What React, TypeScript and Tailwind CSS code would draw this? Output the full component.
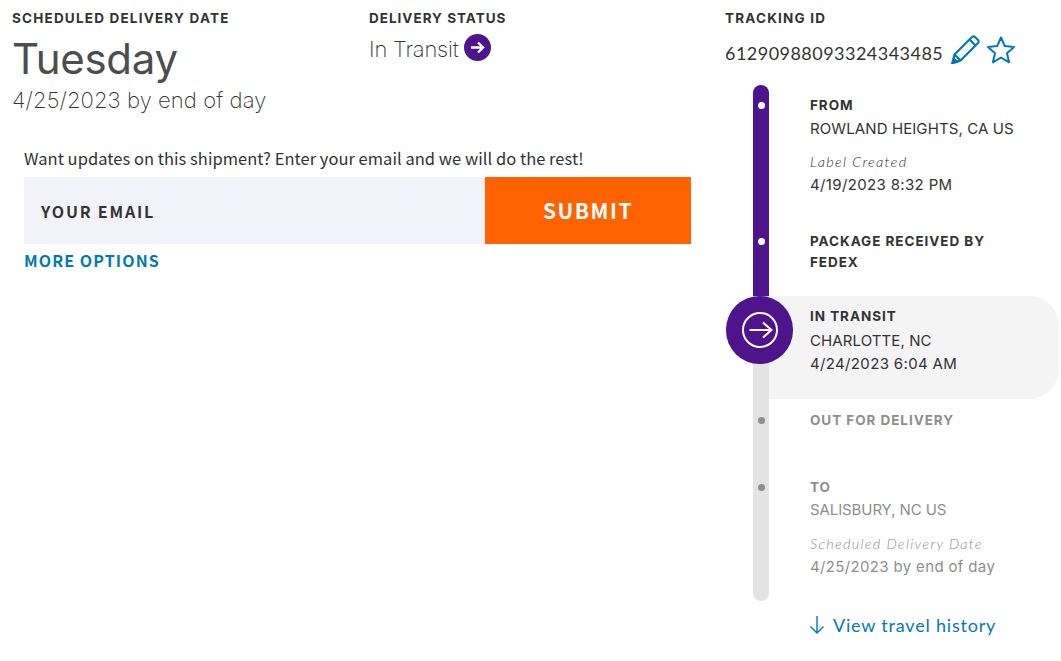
import React from "react";

const mont = "font-['Inter',sans-serif]";
const source = "font-['Noto_Sans_CJK_SC',sans-serif]";
const lato = "font-['Lato',sans-serif]";

function Label({ children, muted, className }: { children: React.ReactNode; muted?: boolean; className?: string }) {
  return (
    <div
      className={`${mont} text-[13.5px] leading-[21px] font-bold ${className ?? "tracking-[0.95px]"} ${
        muted ? "text-[#8e8e8e]" : "text-[#333333]"
      }`}>
      {children}
    </div>
  );
}

function Line({ children, className }: { children: React.ReactNode; className?: string }) {
  return <div className={`${mont} text-[15px] leading-[24px] ${className ?? "tracking-[0.1px]"}`}>{children}</div>;
}

function Note({ children }: { children: React.ReactNode }) {
  return <div className={`${lato} text-[14.5px] leading-[22px] font-light italic tracking-[1.25px]`}>{children}</div>;
}

function Dot({ muted }: { muted?: boolean }) {
  return <div className={`w-[7px] h-[7px] rounded-full ${muted ? "bg-[#8e8e8e]" : "bg-white"}`} />;
}

function Row({
  h,
  rail,
  dot,
  muted,
  top,
  extra,
  children,
}: {
  h: string;
  rail: string;
  dot?: boolean;
  muted?: boolean;
  top: string;
  extra?: string;
  children: React.ReactNode;
}) {
  return (
    <div className={`flex ${h}`}>
      <div className={`w-4 shrink-0 ${rail} ${top} flex justify-center`}>{dot && <Dot muted={muted} />}</div>
      <div className={`flex-1 pl-[41px] ${extra ?? ""} ${muted ? "text-[#8e8e8e]" : "text-[#333333]"}`}>
        {children}
      </div>
    </div>
  );
}

export default function App() {
  return (
    <div className="w-[1061px] h-[661px] bg-white flex overflow-hidden">
      <div className="w-[725px] shrink-0 pl-3 pt-[8px]">
        <div className="flex">
          <div className="w-[357px]">
            <Label className="tracking-[1.2px]">SCHEDULED DELIVERY DATE</Label>
            <div className={`${mont} text-[42px] leading-[56px] text-[#4d4d4d] tracking-[-0.3px] mt-[2px]`}>
              Tuesday
            </div>
            <div className={`${mont} text-[22px] leading-[26px] font-extralight text-[#333333] tracking-[0.08px]`}>
              4/25/2023 by end of day
            </div>
          </div>
          <div>
            <Label className="tracking-[1px]">DELIVERY STATUS</Label>
            <div className="flex items-center gap-[6px] mt-[4px]">
              <span className={`${mont} text-[22px] leading-[32px] font-extralight text-[#333333] tracking-[-0.2px]`}>
                In Transit
              </span>
              <svg width="27" height="27" viewBox="0 0 27 27" className="-mt-[3px]">
                <circle cx="13.5" cy="13.5" r="13.5" fill="#4d148c" />
                <path d="M7 13.5h12M14 8.5l5 5-5 5" fill="none" stroke="#fff" strokeWidth="2.4" />
              </svg>
            </div>
          </div>
        </div>
        <div className="pl-3 mt-[33px] w-[679px]">
          <div className={`${source} text-[16.5px] leading-[24px] tracking-[0.03px] text-[#333333]`}>
            Want updates on this shipment? Enter your email and we will do the rest!
          </div>
          <div className="flex h-[67px] mt-[7px]">
            <div
              className={`flex-1 bg-[#f2f3f8] flex items-center pl-[17px] ${source} text-[16px] font-bold tracking-[1.8px] text-[#333333]`}>
              YOUR EMAIL
            </div>
            <div
              className={`w-[206px] bg-[#ff6200] flex items-center justify-center ${source} text-[21px] font-bold tracking-[1.5px] text-white`}>
              SUBMIT
            </div>
          </div>
          <div className={`${source} text-[16px] leading-[24px] font-bold tracking-[1.1px] text-[#007ab7] mt-[4px]`}>
            MORE OPTIONS
          </div>
        </div>
      </div>

      <div className="flex-1 pt-[8px]">
        <Label className="tracking-[1.2px]">TRACKING ID</Label>
        <div className="flex items-center h-[34px] mt-[7px]">
          <span className={`${lato} text-[18px] leading-[24px] tracking-[0.47px] text-[#333333]`}>
            61290988093324343485
          </span>
          <svg width="30" height="30" viewBox="0 0 30 30" className="ml-[8px] mb-[8px]" fill="none" stroke="#007ab7" strokeWidth="2.2">
            <path d="M1.5 29l2-8.5L21 3a2 2 0 0 1 3 0l3 3a2 2 0 0 1 0 3L9.5 26.5z" />
            <path d="M3.5 20.5l6 6M18.5 5.5l6 6" />
            <path d="M1.5 29l4.5-1.2-3.3-3.3z" fill="#007ab7" />
          </svg>
          <svg width="30" height="30" viewBox="0 0 30 30" className="ml-[5px] mb-[7px]" fill="none" stroke="#007ab7" strokeWidth="2">
            <path d="M15 2.5l3.8 8.6 9.2.9-7 6.2 2.1 9.1-8.1-4.8-8.1 4.8 2.1-9.1-7-6.2 9.2-.9z" strokeLinejoin="round" />
          </svg>
        </div>

        <div className="relative ml-7 mt-[15px]">
          <Row h="h-[136px]" rail="bg-[#4d148c] rounded-t-lg" top="pt-[17px]" dot>
            <div className="pt-[10px]">
              <Label>FROM</Label>
              <Line className="tracking-[0.1px] mt-px">ROWLAND HEIGHTS, CA US</Line>
              <div className="mt-[10px]">
                <Note>Label Created</Note>
              </div>
              <Line className="tracking-[0.35px]">4/19/2023 8:32 PM</Line>
            </div>
          </Row>
          <Row h="h-[75px]" rail="bg-[#4d148c]" top="pt-[17px]" dot>
            <div className="pt-[10px] w-[200px]">
              <Label>PACKAGE RECEIVED BY FEDEX</Label>
            </div>
          </Row>
          <Row h="h-[103px]" rail="bg-[#e3e3e3]" top="pt-0" extra="bg-[#f4f4f4] rounded-r-[30px] mr-[2px]">
            <div className="pt-[10px]">
              <Label>IN TRANSIT</Label>
              <Line className="tracking-[0.1px] mt-[2px]">CHARLOTTE, NC</Line>
              <Line className="tracking-[0.35px] -mt-px">4/24/2023 6:04 AM</Line>
            </div>
          </Row>
          <Row h="h-[68px]" rail="bg-[#e3e3e3]" top="pt-[18px]" dot muted>
            <div className="pt-[11px]">
              <Label muted>OUT FOR DELIVERY</Label>
            </div>
          </Row>
          <Row h="h-[134px]" rail="bg-[#e3e3e3] rounded-b-lg" top="pt-[17px]" dot muted>
            <div className="pt-[10px]">
              <Label muted>TO</Label>
              <Line className="tracking-[-0.1px]">SALISBURY, NC US</Line>
              <div className="mt-[11px]">
                <Note>Scheduled Delivery Date</Note>
              </div>
              <Line className="tracking-[0.35px]">4/25/2023 by end of day</Line>
            </div>
          </Row>

          {/* current step marker sits over the rail */}
          <div className="absolute left-[-27px] top-[211px] w-[67px] h-[68px] rounded-full bg-[#4d148c] flex items-center justify-center">
            <svg width="38" height="38" viewBox="0 0 38 38" fill="none" stroke="#fff" strokeWidth="2">
              <circle cx="19" cy="19" r="17" />
              <path d="M8.5 19h22M22 11.5l8.5 7.5-8.5 7.5" />
            </svg>
          </div>
        </div>

        <div className="flex items-center ml-[85px] mt-[12px] text-[#007ab7]">
          <svg width="14" height="20" viewBox="0 0 14 20" fill="none" stroke="#007ab7" strokeWidth="1.4">
            <path d="M7 1v17M0.5 11.5L7 18l6.5-6.5" />
          </svg>
          <span className={`${lato} text-[18px] leading-[24px] tracking-[0.8px] ml-[9px]`}>View travel history</span>
        </div>
      </div>
    </div>
  );
}
